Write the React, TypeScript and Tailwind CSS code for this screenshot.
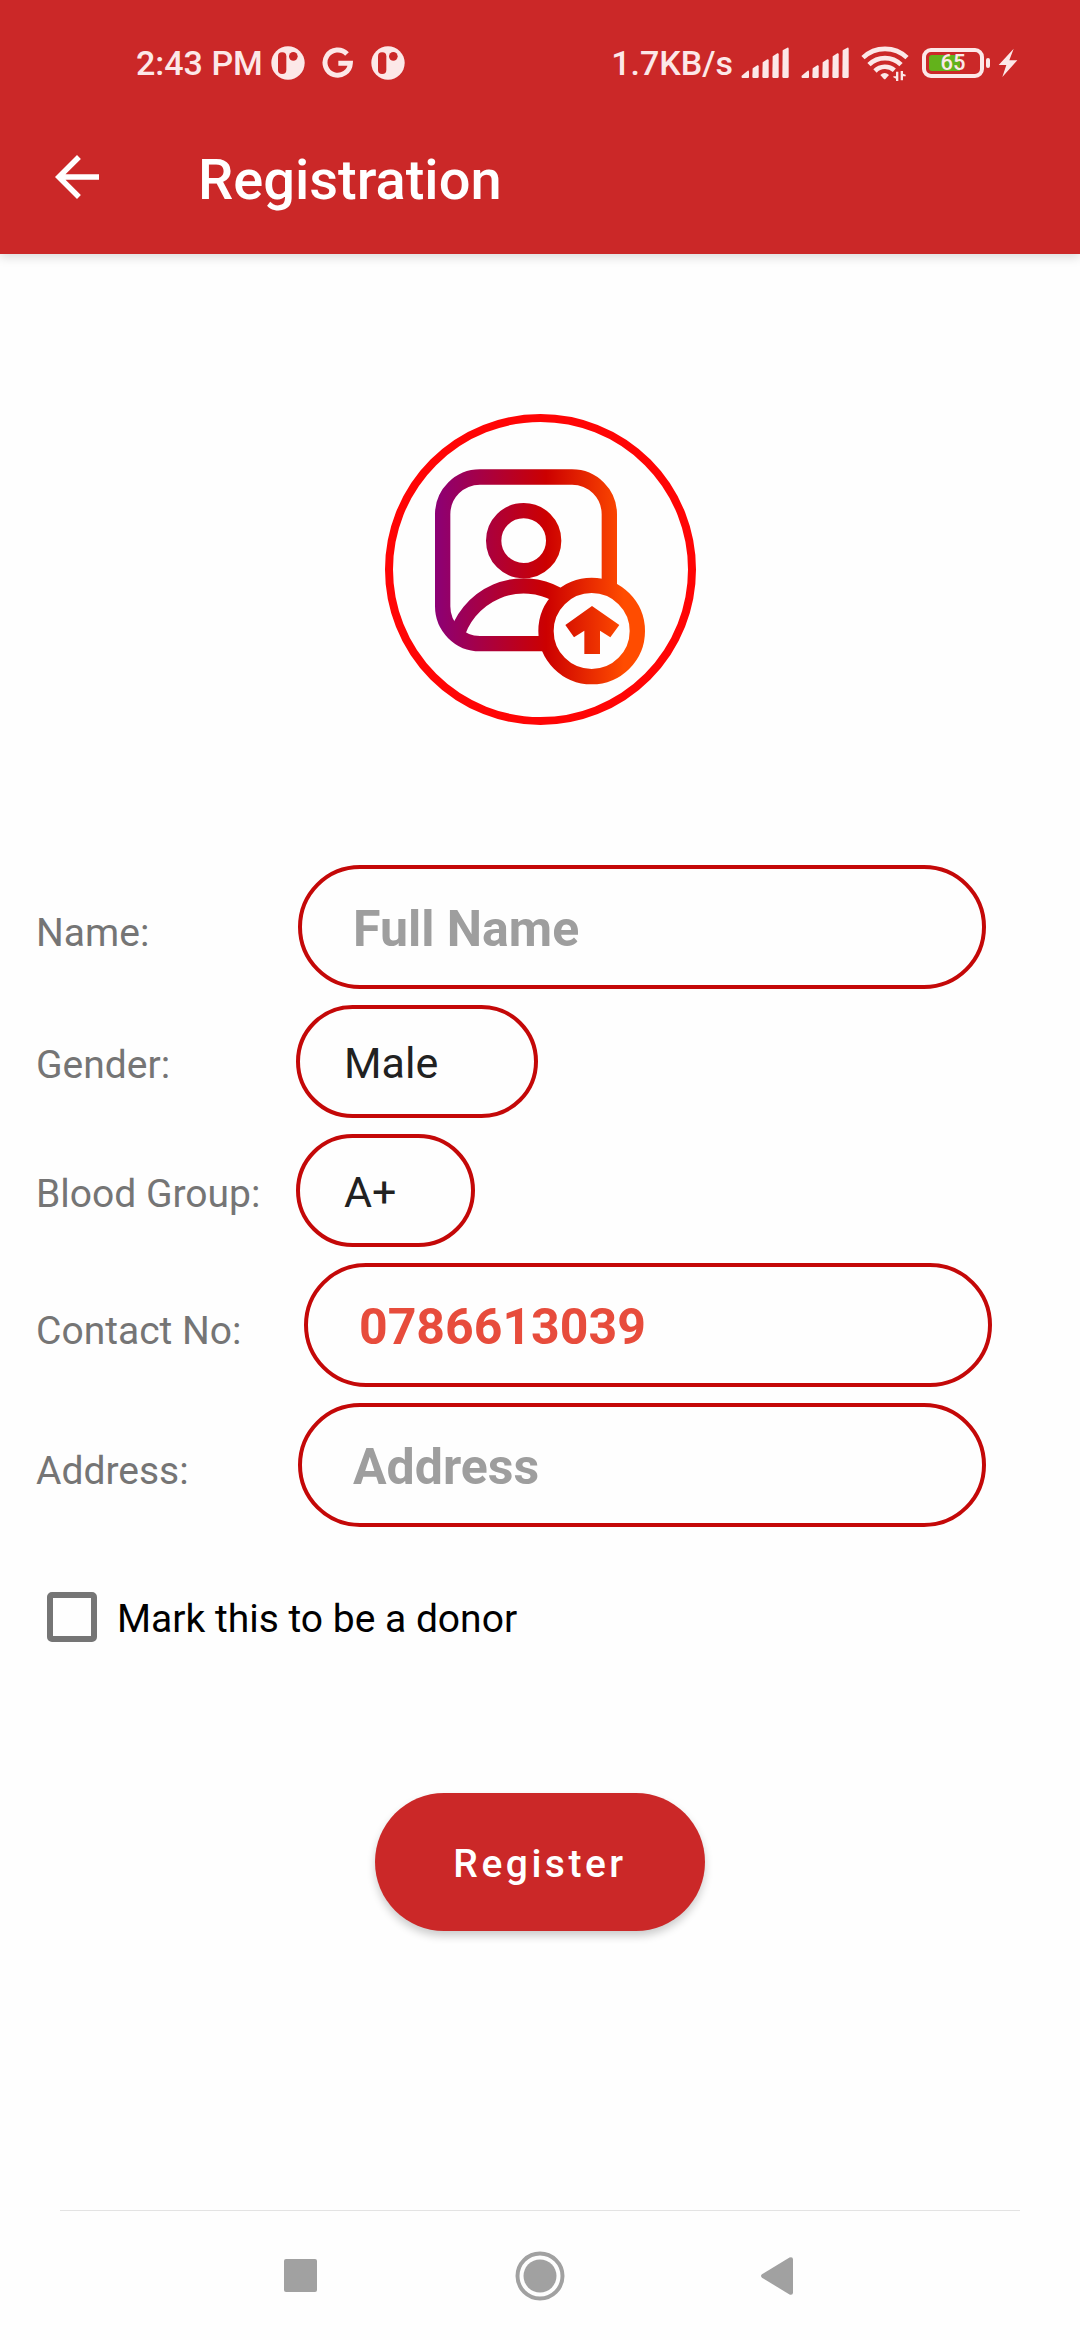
import type { ReactNode } from "react";

const INK = "#fce8e8";

function AppBadge() {
  return (
    <svg className="size-[34px]" viewBox="0 0 102 102" aria-hidden="true">
      <circle cx="51" cy="51" r="50" fill={INK} />
      <rect x="21" y="19" width="25" height="65" rx="12" fill="#cb2828" />
      <circle cx="67" cy="31" r="13" fill="#cb2828" />
    </svg>
  );
}

function GoogleMark() {
  return (
    <svg className="size-[34px]" viewBox="0 0 102 102" aria-hidden="true">
      <path d="M78 24A38 38 0 1 0 88 52H52" fill="none" stroke={INK} strokeWidth="15" />
    </svg>
  );
}

function Signal() {
  return (
    <svg className="h-8 w-12" viewBox="0 0 144 96" fill={INK} aria-hidden="true">
      <path d="M2 86 20 71Q24 70 24 74V90Q24 93 21 93H4Q0 92 2 86Z" />
      <path d="M35 64 49 55Q53 54 53 58V89Q53 93 49 93H38Q34 93 34 89Z" />
      <path d="M65 46 79 37Q83 36 83 40V89Q83 93 79 93H68Q64 93 64 89Z" />
      <path d="M95 28 109 19Q113 18 113 22V89Q113 93 109 93H98Q94 93 94 89Z" />
      <path d="M125 10 139 2Q143 1 143 5V89Q143 93 139 93H128Q124 93 124 89Z" />
    </svg>
  );
}

function Wifi() {
  return (
    <svg className="h-9 w-12" viewBox="0 0 144 108" aria-hidden="true">
      <g fill="none" stroke={INK} strokeWidth="14">
        <path d="M6 38A96 96 0 0 1 138 38" />
        <path d="M24 59A68 68 0 0 1 120 59" />
        <path d="M42 78A42 42 0 0 1 100 76" />
      </g>
      <path d="M58 90Q71 78 84 90L74 101Q71 104 68 101Z" fill={INK} />
      <path d="M105 80H112V108H105ZM97 94H105V101L97 97ZM119 78H126V106H119ZM126 86 134 89V94H126Z" fill={INK} />
    </svg>
  );
}

function Battery() {
  return (
    <span className="flex items-center gap-0.5">
      <span className="flex h-[30px] w-[62px] items-center rounded-[9px] border-4 border-[#fce8e8] p-[3px]">
        <span className="flex h-4 w-full items-center justify-center rounded-[3px] bg-linear-to-r from-[#63b21b] from-[65%] to-transparent to-[65%] text-[22px] leading-4 font-medium">
          65
        </span>
      </span>
      <span className="h-2.5 w-1 rounded-sm bg-[#fce8e8]" />
    </span>
  );
}

function Bolt() {
  return (
    <svg className="h-[30px] w-5" viewBox="0 0 60 90" aria-hidden="true">
      <path d="M47 2 2 51H25L13 87 58 37H34Z" fill={INK} />
    </svg>
  );
}

function StatusBar() {
  return (
    <div className="flex h-[100px] items-center justify-between pt-[26px] pr-[62px] pl-[136px] text-[34px] font-medium text-[#fce8e8]">
      <div className="flex items-center gap-2">
        <span>2:43 PM</span>
        <span className="flex gap-4">
          <AppBadge />
          <GoogleMark />
          <AppBadge />
        </span>
      </div>
      <div className="flex items-center gap-3">
        <span className="flex items-center gap-2">
          <span>1.7KB/s</span>
          <Signal />
        </span>
        <Signal />
        <Wifi />
        <span className="flex items-center gap-2 pl-px">
          <Battery />
          <Bolt />
        </span>
      </div>
    </div>
  );
}

function AvatarArt() {
  return (
    <svg className="size-full" viewBox="66 66 885 885" aria-hidden="true">
      <defs>
        <linearGradient id="warm" gradientUnits="userSpaceOnUse" x1="192" y1="0" x2="822" y2="0">
          <stop offset="0" stopColor="#8c0076" />
          <stop offset="0.53" stopColor="#cc0000" />
          <stop offset="0.9" stopColor="#ff4c00" />
        </linearGradient>
      </defs>
      <g fill="none" stroke="url(#warm)" strokeWidth="46">
        <path d="M715 560V343A112 112 0 0 0 603 231H327A112 112 0 0 0 215 343V619A112 112 0 0 0 327 731H530" />
        <circle cx="458" cy="422" r="90" />
        <path d="M255 715A210 210 0 0 1 560 584" />
        <circle cx="662" cy="693" r="137" />
      </g>
      <path
        d="M663 618 745 675 718 712 687 692V762H640V692L609 712 583 675Z"
        fill="url(#warm)"
      />
    </svg>
  );
}

const LABEL = "shrink-0 text-[39px] text-[#757575]";
const FIELD =
  "h-[124px] min-w-0 flex-1 rounded-full border-4 border-[#c40808] bg-transparent px-[51px] pt-1 text-[50px] font-bold text-[#e74c3c] outline-none placeholder:text-[#9e9e9e] placeholder:opacity-100";
const PICKER =
  "h-[113px] appearance-none rounded-full border-4 border-[#c40808] bg-transparent px-11 pt-1 text-[43px] text-[#212121] outline-none";

function Row({ children, className }: { children: ReactNode; className: string }) {
  return <div className={`flex items-baseline ${className}`}>{children}</div>;
}

export default function App() {
  return (
    <div className="flex min-h-screen flex-col bg-[#fefefe] font-['Roboto',sans-serif]">
      <header className="bg-[#cb2828] text-white shadow-[0_3px_10px_rgba(0,0,0,0.15)]">
        <StatusBar />
        <div className="flex h-[154px] items-center gap-[88px] pl-11">
          <button type="button" aria-label="Back" className="size-[66px]">
            <svg viewBox="0 0 24 24" fill="currentColor" aria-hidden="true">
              <path d="M20 11H7.83l5.59-5.59L12 4l-8 8 8 8 1.41-1.41L7.83 13H20v-2z" />
            </svg>
          </button>
          <h1 className="pt-1.5 text-[56px] font-medium">Registration</h1>
        </div>
      </header>

      <form className="flex flex-col" onSubmit={(e) => e.preventDefault()}>
        <button
          type="button"
          aria-label="Upload photo"
          className="mt-40 size-[311px] self-center rounded-full border-8 border-[#ff0505]"
        >
          <AvatarArt />
        </button>

        <div className="mt-[140px] flex flex-col gap-4 pl-9">
          <Row className="pr-[94px]">
            <label htmlFor="name" className={`${LABEL} w-[262px]`}>Name:</label>
            <input id="name" type="text" placeholder="Full Name" className={FIELD} />
          </Row>
          <Row className="">
            <label htmlFor="gender" className={`${LABEL} w-[260px]`}>Gender:</label>
            <select id="gender" defaultValue="Male" className={`${PICKER} w-[242px]`}>
              <option>Male</option>
              <option>Female</option>
            </select>
          </Row>
          <Row className="">
            <label htmlFor="blood" className={`${LABEL} w-[260px]`}>Blood Group:</label>
            <select id="blood" defaultValue="A+" className={`${PICKER} w-[179px]`}>
              <option>A+</option>
              <option>B+</option>
              <option>O+</option>
            </select>
          </Row>
          <Row className="pr-[88px]">
            <label htmlFor="contact" className={`${LABEL} w-[268px]`}>Contact No:</label>
            <input id="contact" type="tel" defaultValue="0786613039" className={FIELD} />
          </Row>
          <Row className="pr-[94px]">
            <label htmlFor="address" className={`${LABEL} w-[262px]`}>Address:</label>
            <input id="address" type="text" placeholder="Address" className={FIELD} />
          </Row>
        </div>

        <label className="mt-[65px] ml-[47px] flex h-[50px] items-center gap-5 self-start text-[39px] text-black">
          <input
            type="checkbox"
            className="size-[50px] appearance-none rounded-[5px] border-6 border-[#757575] checked:bg-[#757575]"
          />
          <span className="pt-1">Mark this to be a donor</span>
        </label>

        <button
          type="submit"
          className="mt-[151px] h-[138px] w-[330px] self-center rounded-full bg-[#cb2828] pt-1 text-[39px] font-medium tracking-[0.09em] text-white shadow-[0_5px_8px_rgba(0,0,0,0.2)]"
        >
          Register
        </button>
      </form>

      <nav className="mx-[60px] mt-auto flex h-[130px] items-center justify-center border-t border-[#e3e3e3] text-[#a1a1a1]">
        <button type="button" aria-label="Recent apps" className="flex w-60 justify-center">
          <svg className="size-[50px]" viewBox="0 0 50 50" fill="currentColor" aria-hidden="true">
            <rect x="9" y="8" width="33" height="33" rx="2" />
          </svg>
        </button>
        <button type="button" aria-label="Home" className="flex w-60 justify-center">
          <svg className="size-[50px]" viewBox="0 0 50 50" fill="currentColor" aria-hidden="true">
            <circle cx="25" cy="25" r="22.5" fill="none" stroke="currentColor" strokeWidth="4" />
            <circle cx="25" cy="25" r="16.5" />
          </svg>
        </button>
        <button type="button" aria-label="Back navigation" className="flex w-60 justify-center">
          <svg className="size-[50px]" viewBox="0 0 50 50" fill="currentColor" aria-hidden="true">
            <path d="M7 23.300Q5 25 7 26.700L34.500 43.500Q38 44.500 38 41.500V8.500Q38 5.500 34.500 6.500Z" />
          </svg>
        </button>
      </nav>
    </div>
  );
}
